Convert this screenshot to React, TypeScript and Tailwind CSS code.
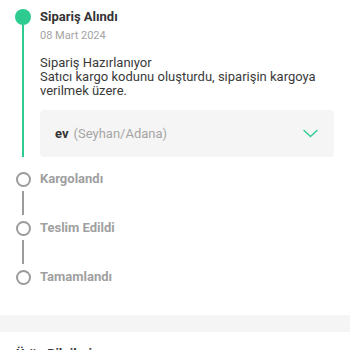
import React from 'react';

const GREEN = '#2ecb91';

function PendingStep({ label, last }: { label: string; last?: boolean }) {
  return (
    <div className="flex flex-col">
      <div className="flex items-center gap-[9px]">
        <div className="flex w-4 justify-center">
          <div className="h-[15px] w-[15px] rounded-full border-2 border-[#9b9b9b]" />
        </div>
        <span className="text-[13px] font-bold leading-4 text-[#a0a0a0]">{label}</span>
      </div>
      {!last && (
        <div className="flex w-4 justify-center pt-1 pb-[5px]">
          <div className="h-6 w-[2px] bg-[#9b9b9b]" />
        </div>
      )}
    </div>
  );
}

export default function App() {
  return (
    <div className="w-[350px] h-[350px] overflow-hidden bg-white font-['Roboto',sans-serif]">
      <div className="pl-[15px] pr-4 pt-[9px]">
        {/* Active step */}
        <div className="flex gap-[9px] pb-[7px]">
          <div className="flex w-4 flex-col items-center">
            <div className="h-4 w-4 rounded-full bg-[#2ecb91]" />
            <div className="w-[2px] flex-1 bg-[#2ecb91]" />
          </div>
          <div className="flex-1">
            <div className="text-[13px] font-bold leading-4 text-[#333]">Sipariş Alındı</div>
            <div className="mt-[3px] text-[11px] leading-4 text-[#a3a3a3]">08 Mart 2024</div>
            <div className="mt-3 text-[13px] leading-[14px] text-[#3a3a3a]">
              Sipariş Hazırlanıyor
              <br />
              Satıcı kargo kodunu oluşturdu, siparişin kargoya verilmek üzere.
            </div>
            <div className="mt-3 flex h-[47px] items-center justify-between rounded-sm bg-[#f5f5f5] pl-[15px] pr-4">
              <div className="flex items-baseline gap-[5px]">
                <span className="text-[13px] font-bold text-[#333]">ev</span>
                <span className="text-[13px] text-[#a5a5a5]">(Seyhan/Adana)</span>
              </div>
              <svg width="15" height="9" viewBox="0 0 15 9" fill="none">
                <path d="M1 1.5 7.5 7.5 14 1.5" stroke={GREEN} strokeWidth="1.4" strokeLinecap="round" strokeLinejoin="round" />
              </svg>
            </div>
          </div>
        </div>

        <div className="mt-[7px] flex flex-col">
          <PendingStep label="Kargolandı" />
          <PendingStep label="Teslim Edildi" />
          <PendingStep label="Tamamlandı" last />
        </div>
      </div>

      <div className="mt-[30px] h-[17px] w-full bg-[#f5f5f5]" />
      <div className="pl-4 pt-[14px] text-[13px] font-bold leading-4 text-[#333]">Ürün Bilgileri</div>
    </div>
  );
}
